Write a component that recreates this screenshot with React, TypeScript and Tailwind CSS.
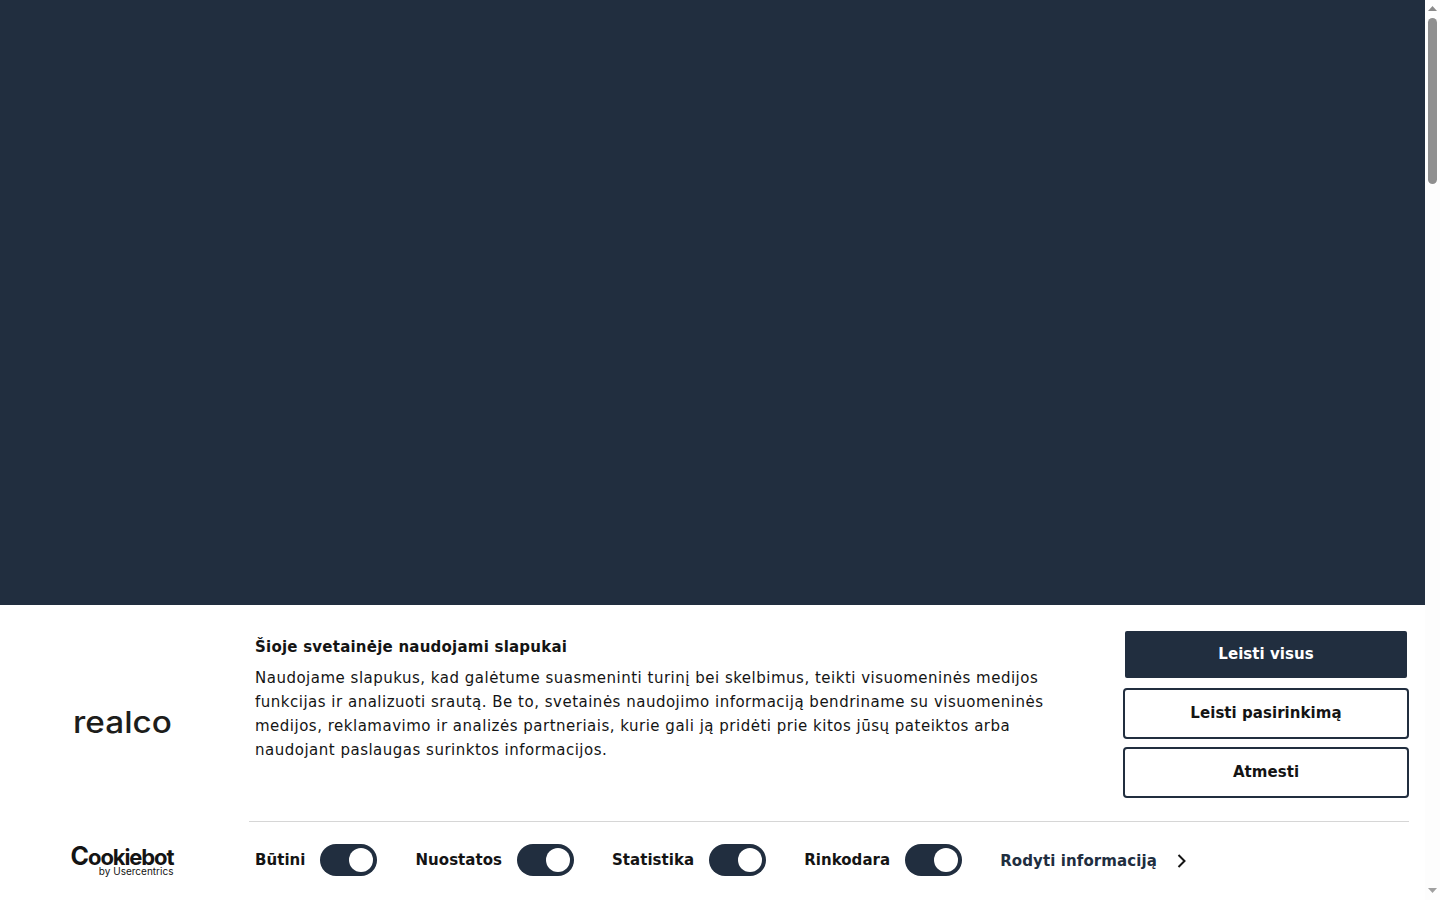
import React from "react";

function Toggle({ label }: { label: string }) {
  return (
    <div className="flex items-center gap-[15px]">
      <span className="text-[15px] font-bold tracking-[0.04px] text-[#141414]">{label}</span>
      <span className="flex h-8 w-[57px] items-center justify-end rounded-full bg-[#212e3f] p-1">
        <span className="h-6 w-6 rounded-full bg-white" />
      </span>
    </div>
  );
}

function Button({ children, primary }: { children: React.ReactNode; primary?: boolean }) {
  return primary ? (
    <button className="h-[51px] w-full rounded-[4px] border-2 border-transparent bg-[#212e3f] bg-clip-padding text-[15px] font-bold tracking-[0.05px] text-white">
      {children}
    </button>
  ) : (
    <button className="h-[51px] w-full rounded-[4px] border-2 border-[#212e3f] bg-white text-[15px] font-bold tracking-[0.05px] text-[#141414]">
      {children}
    </button>
  );
}

export default function App() {
  return (
    <div className="flex h-screen overflow-hidden bg-[#fdfdfd] font-['DejaVu_Sans',sans-serif]">
      <main className="flex min-w-0 flex-1 flex-col bg-[#212e3f]">
        <div className="flex-1" />
        <section className="h-[295px] bg-white pr-4">
          <div className="flex h-[216px]">
            <div className="flex w-[244px] shrink-0 items-start justify-center pt-[99px]">
              <span className="scale-x-[1.11] font-['Inter',sans-serif] text-[30px] font-[550] leading-9 text-[#1d1d1b]">
                realco
              </span>
            </div>
            <div className="flex-1 pl-[11px] pt-[32px]">
              <h1 className="text-[15px] font-bold leading-[20px] tracking-[0.23px] text-[#141414]">
                Šioje svetainėje naudojami slapukai
              </h1>
              <p className="mt-[9px] w-[800px] text-[15px] leading-6 tracking-[0.5px] text-[#141414]">
                Naudojame slapukus, kad galėtume suasmeninti turinį bei skelbimus, teikti visuomeninės medijos funkcijas ir
                analizuoti srautą. Be to, svetainės naudojimo informaciją bendriname su visuomeninės medijos, reklamavimo ir
                analizės partneriais, kurie gali ją pridėti prie kitos jūsų pateiktos arba naudojant paslaugas surinktos
                informacijos.
              </p>
            </div>
            <div className="flex w-[286px] shrink-0 flex-col gap-2 pt-6">
              <Button primary>Leisti visus</Button>
              <Button>Leisti pasirinkimą</Button>
              <Button>Atmesti</Button>
            </div>
          </div>
          <div className="flex">
            <div className="flex w-[249px] shrink-0 justify-center pr-[5px] pt-[26px]">
              <div className="flex flex-col items-end text-[#141414]">
                <span className="font-['Inter',sans-serif] text-[22px] font-bold leading-[19px] tracking-[-1.1px]">
                  <span className="text-[25px] leading-[19px]">C</span>ookiebot
                </span>
                <span className="font-['Inter',sans-serif] text-[10px] leading-[9px]">by Usercentrics</span>
              </div>
            </div>
            <div className="flex-1">
              <div className="flex items-center gap-[38px] border-t border-[#d6d6d6] pl-[6px] pt-[22px]">
                <Toggle label="Būtini" />
                <Toggle label="Nuostatos" />
                <Toggle label="Statistika" />
                <Toggle label="Rinkodara" />
                <div className="mt-[2px] flex items-center gap-5">
                  <span className="text-[15px] font-bold tracking-[0.1px] text-[#212e3f]">Rodyti informaciją</span>
                  <svg width="9" height="16" viewBox="0 0 9 16" fill="none" stroke="#141414" strokeWidth="2">
                    <path d="M1.5 2l6 6-6 6" />
                  </svg>
                </div>
              </div>
            </div>
          </div>
        </section>
      </main>
      <aside className="flex w-[15px] shrink-0 flex-col items-center pt-[6px] pb-[7px]">
        <svg width="9" height="5" viewBox="0 0 9 5" fill="#8a8a8a">
          <path d="M4.5 0 9 5H0z" />
        </svg>
        <div className="mt-[7px] h-[166px] w-[9px] rounded-full bg-[#8f8f8f]" />
        <div className="flex-1" />
        <svg width="9" height="5" viewBox="0 0 9 5" fill="#a0a0a0">
          <path d="M0 0h9L4.5 5z" />
        </svg>
      </aside>
    </div>
  );
}
